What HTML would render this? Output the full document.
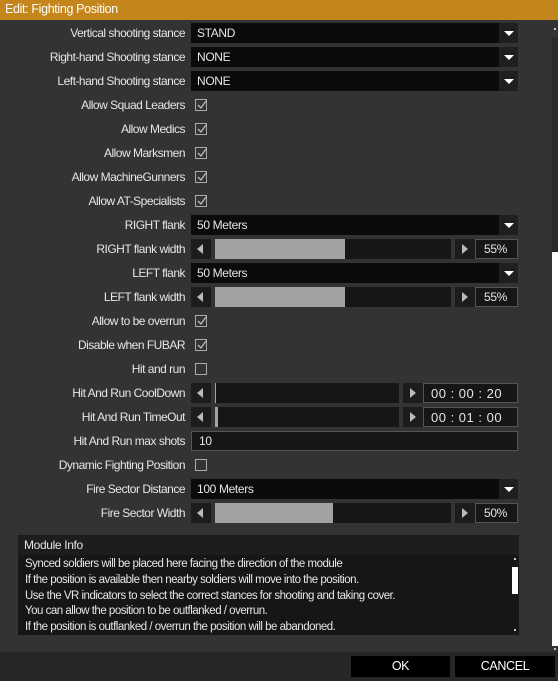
<!DOCTYPE html>
<html><head><meta charset="utf-8"><style>
*{box-sizing:border-box;margin:0;padding:0}
body{width:558px;height:681px;background:#333;font-family:"Liberation Sans",sans-serif;font-size:12px;color:#e6e6e6;position:relative;overflow:hidden;letter-spacing:-0.35px}
.title{position:absolute;left:0;top:0;width:558px;height:20px;background:#c4861a;color:#fff;padding:2px 0 0 5px;font-size:12.5px}
.row{position:absolute;left:0;width:552px;height:24px}
.lbl{position:absolute;right:367px;top:5px;white-space:nowrap;text-align:right;letter-spacing:-0.5px}
.dd{position:absolute;left:191px;top:2px;width:308px;height:20px;background:#0b0b0b;padding:3px 0 0 6px}
.ddb{position:absolute;left:499px;top:2px;width:19px;height:20px;background:#1f1f1f}
.ddb:after{content:"";position:absolute;left:5px;top:8px;border-left:5px solid transparent;border-right:5px solid transparent;border-top:5px solid #fff}
.ab{position:absolute;top:2px;width:20px;height:20px;background:#1c1c1c}
.ab.l:after{content:"";position:absolute;left:6px;top:5px;border-top:5px solid transparent;border-bottom:5px solid transparent;border-right:6px solid #bbb}
.ab.r:after{content:"";position:absolute;left:7px;top:5px;border-top:5px solid transparent;border-bottom:5px solid transparent;border-left:6px solid #bbb}
.tr{position:absolute;left:215px;top:2px;height:20px;background:#161616}
.fill{position:absolute;left:0;top:0;height:20px;background:#a2a2a2}
.val{position:absolute;top:2px;height:20px;background:#161616;border:1px solid #555;padding:2px 0 0 8px}
.cb{position:absolute;left:195px;top:6px;width:12px;height:12px;border:1px solid #aaa}
.cb svg{position:absolute;left:1px;top:0}
.ed{position:absolute;left:191px;top:2px;width:327px;height:20px;background:#161616;border:1px solid #555;padding:2px 0 0 7px}
</style></head><body>
<div class="title">Edit: Fighting Position</div>
<div style="position:absolute;left:552px;top:37px;width:6px;height:215px;background:#2a2a2a"></div>
<div style="position:absolute;left:552px;top:252px;width:6px;height:394px;background:#fff"></div>
<div style="position:absolute;left:554px;top:28px;width:2px;height:2px;background:#ccc"></div>
<div style="position:absolute;left:554px;top:648px;width:2px;height:2px;background:#ccc"></div>

<div class="row" style="top:21px"><div class="lbl">Vertical shooting stance</div><div class="dd">STAND</div><div class="ddb"></div></div>
<div class="row" style="top:45px"><div class="lbl">Right-hand Shooting stance</div><div class="dd">NONE</div><div class="ddb"></div></div>
<div class="row" style="top:69px"><div class="lbl">Left-hand Shooting stance</div><div class="dd">NONE</div><div class="ddb"></div></div>
<div class="row" style="top:93px"><div class="lbl">Allow Squad Leaders</div><div class="cb"><svg width="10" height="10"><path d="M1 5 L4 8 L9 1" stroke="#bbb" stroke-width="1.3" fill="none"/></svg></div></div>
<div class="row" style="top:117px"><div class="lbl">Allow Medics</div><div class="cb"><svg width="10" height="10"><path d="M1 5 L4 8 L9 1" stroke="#bbb" stroke-width="1.3" fill="none"/></svg></div></div>
<div class="row" style="top:141px"><div class="lbl">Allow Marksmen</div><div class="cb"><svg width="10" height="10"><path d="M1 5 L4 8 L9 1" stroke="#bbb" stroke-width="1.3" fill="none"/></svg></div></div>
<div class="row" style="top:165px"><div class="lbl">Allow MachineGunners</div><div class="cb"><svg width="10" height="10"><path d="M1 5 L4 8 L9 1" stroke="#bbb" stroke-width="1.3" fill="none"/></svg></div></div>
<div class="row" style="top:189px"><div class="lbl">Allow AT-Specialists</div><div class="cb"><svg width="10" height="10"><path d="M1 5 L4 8 L9 1" stroke="#bbb" stroke-width="1.3" fill="none"/></svg></div></div>
<div class="row" style="top:213px"><div class="lbl">RIGHT flank</div><div class="dd">50 Meters</div><div class="ddb"></div></div>
<div class="row" style="top:237px"><div class="lbl">RIGHT flank width</div><div class="ab l" style="left:191px"></div><div class="tr" style="width:236px"><div class="fill" style="width:130px"></div></div><div class="ab r" style="left:455px"></div><div class="val" style="left:475px;width:43px">55%</div></div>
<div class="row" style="top:261px"><div class="lbl">LEFT flank</div><div class="dd">50 Meters</div><div class="ddb"></div></div>
<div class="row" style="top:285px"><div class="lbl">LEFT flank width</div><div class="ab l" style="left:191px"></div><div class="tr" style="width:236px"><div class="fill" style="width:130px"></div></div><div class="ab r" style="left:455px"></div><div class="val" style="left:475px;width:43px">55%</div></div>
<div class="row" style="top:309px"><div class="lbl">Allow to be overrun</div><div class="cb"><svg width="10" height="10"><path d="M1 5 L4 8 L9 1" stroke="#bbb" stroke-width="1.3" fill="none"/></svg></div></div>
<div class="row" style="top:333px"><div class="lbl">Disable when FUBAR</div><div class="cb"><svg width="10" height="10"><path d="M1 5 L4 8 L9 1" stroke="#bbb" stroke-width="1.3" fill="none"/></svg></div></div>
<div class="row" style="top:357px"><div class="lbl">Hit and run</div><div class="cb"></div></div>
<div class="row" style="top:381px"><div class="lbl">Hit And Run CoolDown</div><div class="ab l" style="left:191px"></div><div class="tr" style="width:184px"><div class="fill" style="width:1px"></div></div><div class="ab r" style="left:403px"></div><div class="val" style="left:423px;width:95px;font-size:13px;letter-spacing:0.5px;padding-left:7px">00 : 00 : 20</div></div>
<div class="row" style="top:405px"><div class="lbl">Hit And Run TimeOut</div><div class="ab l" style="left:191px"></div><div class="tr" style="width:184px"><div class="fill" style="width:3px"></div></div><div class="ab r" style="left:403px"></div><div class="val" style="left:423px;width:95px;font-size:13px;letter-spacing:0.5px;padding-left:7px">00 : 01 : 00</div></div>
<div class="row" style="top:429px"><div class="lbl">Hit And Run max shots</div><div class="ed">10</div></div>
<div class="row" style="top:453px"><div class="lbl">Dynamic Fighting Position</div><div class="cb"></div></div>
<div class="row" style="top:477px"><div class="lbl">Fire Sector Distance</div><div class="dd">100 Meters</div><div class="ddb"></div></div>
<div class="row" style="top:501px"><div class="lbl">Fire Sector Width</div><div class="ab l" style="left:191px"></div><div class="tr" style="width:236px"><div class="fill" style="width:118px"></div></div><div class="ab r" style="left:455px"></div><div class="val" style="left:475px;width:43px">50%</div></div>

<div style="position:absolute;left:18px;top:535px;width:501px;height:20px;background:#1d1d1d;padding:3px 0 0 6px">Module Info</div>
<div style="position:absolute;left:18px;top:555px;width:501px;height:80px;background:#161616;padding:2px 0 0 7px;line-height:15.8px;font-size:11.5px;letter-spacing:-0.5px">
Synced soldiers will be placed here facing the direction of the module<br>If the position is available then nearby soldiers will move into the position.<br>Use the VR indicators to select the correct stances for shooting and taking cover.<br>You can allow the position to be outflanked / overrun.<br>If the position is outflanked / overrun the position will be abandoned.</div>
<div style="position:absolute;left:512px;top:567px;width:6px;height:27px;background:#fff"></div>
<div style="position:absolute;left:514px;top:558px;width:2px;height:2px;background:#ccc"></div>
<div style="position:absolute;left:514px;top:629px;width:2px;height:2px;background:#ccc"></div>

<div style="position:absolute;left:0;top:652px;width:558px;height:29px;background:#262626"></div>
<div style="position:absolute;left:351px;top:656px;width:99px;height:21px;background:#000;color:#fff;text-align:center;padding-top:3px;font-size:12.5px">OK</div>
<div style="position:absolute;left:455px;top:656px;width:100px;height:21px;background:#000;color:#fff;text-align:center;padding-top:3px;font-size:12.5px">CANCEL</div>
</body></html>
